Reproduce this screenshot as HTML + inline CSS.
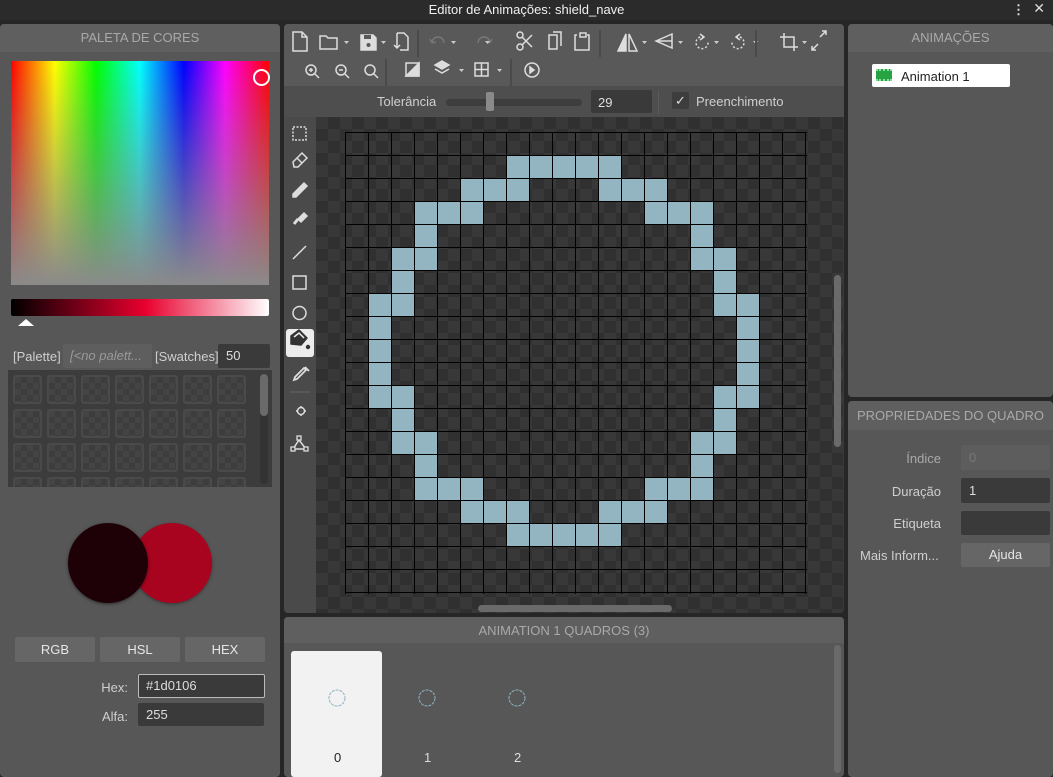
<!DOCTYPE html>
<html><head><meta charset="utf-8">
<style>
*{box-sizing:border-box;margin:0;padding:0}
body{width:1053px;height:777px;background:#262626;font-family:"Liberation Sans",sans-serif;font-size:13px;color:#ddd;position:relative;overflow:hidden}
.abs{position:absolute}
.panel{position:absolute;background:#575757;border-radius:4px;overflow:hidden}
.hdr{position:absolute;left:0;right:0;top:0;height:28px;background:#5f5f5f;color:#a9a9a9;text-align:center;line-height:28px;font-size:13px}
.btn{position:absolute;background:#666;color:#e6e6e6;text-align:center;border-radius:2px;font-size:13px}
.inp{position:absolute;background:#3a3a3a;color:#ddd;border-radius:2px;padding-left:8px;font-size:13px}
.lbl{position:absolute;color:#cfcfcf;font-size:13px;text-align:right}
svg{position:absolute}
.ic{stroke:#ddd;fill:none;stroke-width:1.5}
.sw{position:absolute;width:29px;height:29px;border:2px solid #4a4a4a;border-radius:3px;background:conic-gradient(#3d3d3d 25%,#444 0 50%,#3d3d3d 0 75%,#444 0) 0 0/12px 12px}
</style></head><body>
<div class="abs" style="left:0;top:0;width:1053px;height:20px;background:#2b2b2b;color:#f0f0f0;text-align:center;line-height:19px;font-size:13px">Editor de Animações: shield_nave</div>
<div class="abs" style="right:28px;top:2px;color:#ddd;font-size:13px;font-weight:bold">⋮</div>
<div class="abs" style="right:8px;top:0;color:#ddd;font-size:14px">✕</div>

<!-- LEFT -->
<div class="panel" style="left:0;top:24px;width:280px;height:753px">
 <div class="hdr">PALETA DE CORES</div>
 <div class="abs" style="left:11px;top:37px;width:258px;height:224px;background:linear-gradient(to bottom,rgba(128,128,128,0),#8a8a8a),linear-gradient(to right,#f00,#ff0 17%,#0f0 33%,#0ff 50%,#00f 67%,#f0f 83%,#f00)"></div>
 <div class="abs" style="left:253px;top:45px;width:17px;height:17px;border:2px solid #fff;border-radius:50%"></div>
 <div class="abs" style="left:11px;top:275px;width:258px;height:17px;border-radius:2px;background:linear-gradient(to right,#000,#e8002e 52%,#fff)"></div>
 <div class="abs" style="left:18px;top:295px;width:0;height:0;border-left:8px solid transparent;border-right:8px solid transparent;border-bottom:7px solid #fff"></div>
 <div class="lbl" style="left:13px;top:325px;color:#cfcfcf">[Palette]</div>
 <div class="inp" style="left:63px;top:320px;width:89px;height:24px;background:#5e5e5e;color:#999;font-style:italic;line-height:24px;padding-left:7px">[&lt;no palett...</div>
 <div class="lbl" style="left:155px;top:325px">[Swatches]</div>
 <div class="inp" style="left:218px;top:320px;width:52px;height:24px;line-height:24px">50</div>
 <div class="abs" style="left:8px;top:346px;width:264px;height:117px;background:#3c3c3c;overflow:hidden">
  <div class="sw" style="left:5px;top:5px"></div><div class="sw" style="left:39px;top:5px"></div><div class="sw" style="left:73px;top:5px"></div><div class="sw" style="left:107px;top:5px"></div><div class="sw" style="left:141px;top:5px"></div><div class="sw" style="left:175px;top:5px"></div><div class="sw" style="left:209px;top:5px"></div>
  <div class="sw" style="left:5px;top:39px"></div><div class="sw" style="left:39px;top:39px"></div><div class="sw" style="left:73px;top:39px"></div><div class="sw" style="left:107px;top:39px"></div><div class="sw" style="left:141px;top:39px"></div><div class="sw" style="left:175px;top:39px"></div><div class="sw" style="left:209px;top:39px"></div>
  <div class="sw" style="left:5px;top:73px"></div><div class="sw" style="left:39px;top:73px"></div><div class="sw" style="left:73px;top:73px"></div><div class="sw" style="left:107px;top:73px"></div><div class="sw" style="left:141px;top:73px"></div><div class="sw" style="left:175px;top:73px"></div><div class="sw" style="left:209px;top:73px"></div>
  <div class="sw" style="left:5px;top:107px"></div><div class="sw" style="left:39px;top:107px"></div><div class="sw" style="left:73px;top:107px"></div><div class="sw" style="left:107px;top:107px"></div><div class="sw" style="left:141px;top:107px"></div><div class="sw" style="left:175px;top:107px"></div><div class="sw" style="left:209px;top:107px"></div>
  <div class="abs" style="left:252px;top:4px;width:8px;height:110px;background:#333;border-radius:4px"></div>
  <div class="abs" style="left:252px;top:4px;width:8px;height:42px;background:#6a6a6a;border-radius:4px"></div>
 </div>
 <div class="abs" style="left:132px;top:499px;width:80px;height:80px;border-radius:50%;background:#a8041f;box-shadow:0 1px 3px rgba(0,0,0,.4)"></div>
 <div class="abs" style="left:68px;top:499px;width:80px;height:80px;border-radius:50%;background:#1d0106;box-shadow:0 1px 3px rgba(0,0,0,.5)"></div>
 <div class="btn" style="left:15px;top:613px;width:80px;height:25px;line-height:25px">RGB</div>
 <div class="btn" style="left:100px;top:613px;width:80px;height:25px;line-height:25px">HSL</div>
 <div class="btn" style="left:185px;top:613px;width:80px;height:25px;line-height:25px">HEX</div>
 <div class="lbl" style="left:60px;top:656px;width:68px">Hex:</div>
 <div class="inp" style="left:138px;top:650px;width:127px;height:24px;line-height:22px;border:1px solid #bbb;padding-left:7px">#1d0106</div>
 <div class="lbl" style="left:60px;top:685px;width:68px">Alfa:</div>
 <div class="inp" style="left:138px;top:679px;width:126px;height:23px;line-height:23px">255</div>
</div>

<!-- CENTER -->
<div class="panel" style="left:284px;top:24px;width:560px;height:589px;background:#3a3a3a">
 <div class="abs" style="left:0;top:0;width:560px;height:62px;background:#595959"></div>
 <div class="abs" style="left:0;top:62px;width:560px;height:31px;background:#4e4e4e"></div>
 <svg width="560" height="62" style="left:0;top:0">
  <g class="ic">
   <path d="M9 8h9l5 5v14H9z M18 8v5h5"/>
   <path d="M36 12h6l2 2h9v11H36z"/>
   <path d="M77 11h12l3 3v12H77z" fill="#ddd"/><rect x="80" y="11" width="7" height="4" fill="#595959" stroke="none"/><circle cx="84.5" cy="21" r="2" fill="#595959" stroke="none"/>
   <path d="M113 9h7l4 4v13h-8 M113 9v8 M113 17v7 M110 21l3 3 3-3"/>
   <g stroke="#777"><path d="M148 19a6 6 0 0 1 12 0 M148 19l-2-4 M148 19l4-1"/><path d="M206 19a6 6 0 0 0-12 0 M206 19l2-4 M206 19l-4-1"/></g>
   <circle cx="236" cy="11" r="3"/><circle cx="236" cy="23" r="3"/><path d="M238 13l10 10 M238 21l10-10"/>
   <path d="M265 11h8v14h-8z M269 8h8v14"/>
   <path d="M293 11h-2v15h14V11h-2 M296 9h6v4h-6z"/>
   <path d="M342 10v17h-8z" fill="#ddd"/><path d="M345 10v17h8z"/>
   <path d="M372 17l16-7v14z M372 17h16"/>
   <path d="M420 13a6 6 0 1 0 4 5" stroke-dasharray="2 2"/><path d="M416 10l4 3-4 3"/>
   <path d="M452 13a6 6 0 1 1-4 5" stroke-dasharray="2 2"/><path d="M456 10l-4 3 4 3"/>
   <path d="M500 9v14h14 M496 13h14v14"/>
   <path d="M536 13l6-6 M538 7h4v4 M534 20l-6 6 M528 22v4h4"/>
  </g>
  <g fill="#ccc"><path d="M60 17h5l-2.5 3z M97 17h5l-2.5 3z M167 17h5l-2.5 3z M201 17h5l-2.5 3z M358 17h5l-2.5 3z M394 17h5l-2.5 3z M430 17h5l-2.5 3z M469 17h5l-2.5 3z M518 17h5l-2.5 3z"/></g>
  <g stroke="#4a4a4a" stroke-width="2"><path d="M134 6v27 M316 6v27 M472 6v27"/></g>
  <g class="ic">
   <circle cx="27" cy="46" r="5"/><path d="M31 50l4 4 M25 46h4 M27 44v4"/>
   <circle cx="57" cy="46" r="5"/><path d="M61 50l4 4"/><path d="M55 46h4"/>
   <circle cx="86" cy="46" r="5"/><path d="M90 50l4 4"/>
   <rect x="122" y="39" width="13" height="13"/><path d="M122 52L135 39v13z" fill="#ddd"/>
   <path d="M158 37l7 4-7 4-7-4z" fill="#ddd"/><path d="M151 45l7 4 7-4" />
   <rect x="191" y="39" width="13" height="13"/><path d="M197.5 39v13 M191 45.5h13"/>
   <circle cx="248" cy="46" r="7"/><path d="M246 43v6l4-3z" fill="#ddd"/>
  </g>
  <g fill="#ccc"><path d="M175 45h5l-2.5 3z M213 45h5l-2.5 3z"/></g>
  <g stroke="#4a4a4a" stroke-width="2"><path d="M102 35v27 M227 35v27"/></g>
 </svg>
 <div class="lbl" style="left:93px;top:70px">Tolerância</div>
 <div class="abs" style="left:162px;top:75px;width:136px;height:7px;background:#3d3d3d;border-radius:4px"></div>
 <div class="abs" style="left:202px;top:68px;width:8px;height:19px;background:#8a8a8a;border-radius:2px"></div>
 <div class="inp" style="left:307px;top:66px;width:61px;height:23px;line-height:25px;padding-left:7px">29</div>
 <div class="abs" style="left:374px;top:66px;width:1px;height:24px;background:#5a5a5a"></div>
 <div class="abs" style="left:388px;top:68px;width:17px;height:17px;background:#3d3d3d;border-radius:2px;color:#ddd;font-size:13px;text-align:center;line-height:17px">✓</div>
 <div class="lbl" style="left:412px;top:70px">Preenchimento</div>
 <!-- tool strip -->
 <div class="abs" style="left:0;top:93px;width:32px;height:496px;background:#4a4a4a"></div>
 <div class="abs" style="left:2px;top:305px;width:28px;height:28px;background:#ececec;border-radius:3px"></div>
 <svg width="32" height="340" style="left:0;top:93px">
  <g class="ic">
   <rect x="9" y="10" width="13" height="13" stroke-dasharray="2 1.5"/>
   <path d="M9 45l9-9 5 5-9 9h-4z M13 41l5 5" />
   <path d="M9 77l11-11 3 3-11 11h-3z" fill="#ddd"/>
   <path d="M20 96l3 3-6 6-3-3z" fill="#ddd"/><path d="M14 102l-4 5" stroke-width="3"/>
   <path d="M9 142l13-13"/>
   <rect x="9" y="159" width="13" height="13"/>
   <circle cx="15.5" cy="196" r="6.5"/>
   <path d="M17 289v10 M12 294h10"/><circle cx="17" cy="294" r="3.5" fill="#4a4a4a"/>
   <path d="M15 323l-6 9h13z"/>
  </g>
  <path d="M7 219l8-6 8 8-6 7-10-1z" fill="#333" stroke="#333" stroke-width="1.5" stroke-linejoin="round"/>
  <path d="M10 220l5-4 5 5" fill="none" stroke="#ececec" stroke-width="1.5"/>
  <circle cx="24" cy="230" r="2.2" fill="#333"/>
  <path d="M22 253l-9 9-3 1 1-3 9-9z M21 250l4 4" stroke="#ddd" stroke-width="1.8" fill="none"/>
  <path d="M6 275h20" stroke="#595959" stroke-width="2"/>
  <g fill="#4a4a4a" stroke="#ddd" stroke-width="1.3"><rect x="13" y="319" width="4" height="4"/><rect x="7" y="330" width="4" height="4"/><rect x="20" y="330" width="4" height="4"/></g>
 </svg>
 <!-- canvas -->
 <div class="abs" style="left:32px;top:93px;width:527px;height:496px;background:conic-gradient(#303030 25%,#383838 0 50%,#303030 0 75%,#383838 0) 0 0/24px 24px"></div>
 <svg width="463" height="463" style="left:60px;top:107px">
  <defs><pattern id="g" width="23" height="23" patternUnits="userSpaceOnUse"><path d="M0 0.5H23M0.5 0V23" stroke="#000" stroke-width="1" fill="none"/></pattern></defs>
  <g fill="#93b5c1" transform="translate(1,1)">
   <rect x="161" y="23" width="115" height="23"/>
   <rect x="115" y="46" width="69" height="23"/><rect x="253" y="46" width="69" height="23"/>
   <rect x="69" y="69" width="69" height="23"/><rect x="299" y="69" width="69" height="23"/>
   <rect x="69" y="92" width="23" height="23"/><rect x="345" y="92" width="23" height="23"/>
   <rect x="46" y="115" width="46" height="23"/><rect x="345" y="115" width="46" height="23"/>
   <rect x="46" y="138" width="23" height="23"/><rect x="368" y="138" width="23" height="23"/>
   <rect x="23" y="161" width="46" height="23"/><rect x="368" y="161" width="46" height="23"/>
   <rect x="23" y="184" width="23" height="69"/><rect x="391" y="184" width="23" height="69"/>
   <rect x="23" y="253" width="46" height="23"/><rect x="368" y="253" width="46" height="23"/>
   <rect x="46" y="276" width="23" height="23"/><rect x="368" y="276" width="23" height="23"/>
   <rect x="46" y="299" width="46" height="23"/><rect x="345" y="299" width="46" height="23"/>
   <rect x="69" y="322" width="23" height="23"/><rect x="345" y="322" width="23" height="23"/>
   <rect x="69" y="345" width="69" height="23"/><rect x="299" y="345" width="69" height="23"/>
   <rect x="115" y="368" width="69" height="23"/><rect x="253" y="368" width="69" height="23"/>
   <rect x="161" y="391" width="115" height="23"/>
  </g>
  <rect x="0" y="0" width="462" height="462" fill="url(#g)" transform="translate(1,1)"/>
  <rect x="1.5" y="1.5" width="460" height="460" fill="none" stroke="#000" stroke-width="1"/>
 </svg>
 <div class="abs" style="left:550px;top:251px;width:7px;height:172px;background:#6a6a6a;border-radius:4px"></div>
 <div class="abs" style="left:194px;top:581px;width:194px;height:7px;background:#6a6a6a;border-radius:4px"></div>
</div>

<!-- BOTTOM CENTER -->
<div class="panel" style="left:284px;top:617px;width:560px;height:160px">
 <div class="hdr" style="height:26px;line-height:28px">ANIMATION 1 QUADROS (3)</div>
 <div class="abs" style="left:7px;top:34px;width:91px;height:126px;background:#f2f2f2;border-radius:3px"></div>
 <svg width="300" height="40" style="left:0;top:60px"><g fill="none" stroke="#8fb3c0" stroke-width="1" stroke-dasharray="3 1"><circle cx="53" cy="21" r="8"/><circle cx="143" cy="21" r="8"/><circle cx="233" cy="21" r="8"/></g></svg>
 <div class="abs" style="left:50px;top:133px;color:#222">0</div>
 <div class="abs" style="left:140px;top:133px;color:#ddd">1</div>
 <div class="abs" style="left:230px;top:133px;color:#ddd">2</div>
 <div class="abs" style="left:550px;top:28px;width:7px;height:128px;background:#6a6a6a;border-radius:4px"></div>
</div>

<!-- RIGHT -->
<div class="panel" style="left:848px;top:24px;width:205px;height:373px">
 <div class="hdr">ANIMAÇÕES</div>
 <div class="abs" style="left:24px;top:40px;width:138px;height:23px;background:#fff;border-radius:2px"></div>
 <div class="abs" style="left:28px;top:45px;width:16px;height:12px;background:#27a344;border-top:2px dotted #8fe0a0;border-bottom:2px dotted #8fe0a0"></div>
 <div class="abs" style="left:53px;top:45px;color:#222">Animation 1</div>
</div>
<div class="panel" style="left:848px;top:401px;width:205px;height:376px">
 <div class="hdr" style="height:29px;line-height:30px">PROPRIEDADES DO QUADRO</div>
 <div class="lbl" style="left:0;top:50px;width:93px;color:#a8a8a8">Índice</div>
 <div class="inp" style="left:113px;top:44px;width:89px;height:25px;line-height:25px;background:#5d5d5d;color:#777">0</div>
 <div class="lbl" style="left:0;top:83px;width:93px">Duração</div>
 <div class="inp" style="left:113px;top:77px;width:89px;height:25px;line-height:25px">1</div>
 <div class="lbl" style="left:0;top:115px;width:93px">Etiqueta</div>
 <div class="inp" style="left:113px;top:110px;width:89px;height:24px"></div>
 <div class="lbl" style="left:12px;top:147px;text-align:left">Mais Inform...</div>
 <div class="btn" style="left:113px;top:142px;width:89px;height:24px;line-height:24px">Ajuda</div>
</div>
</body></html>
